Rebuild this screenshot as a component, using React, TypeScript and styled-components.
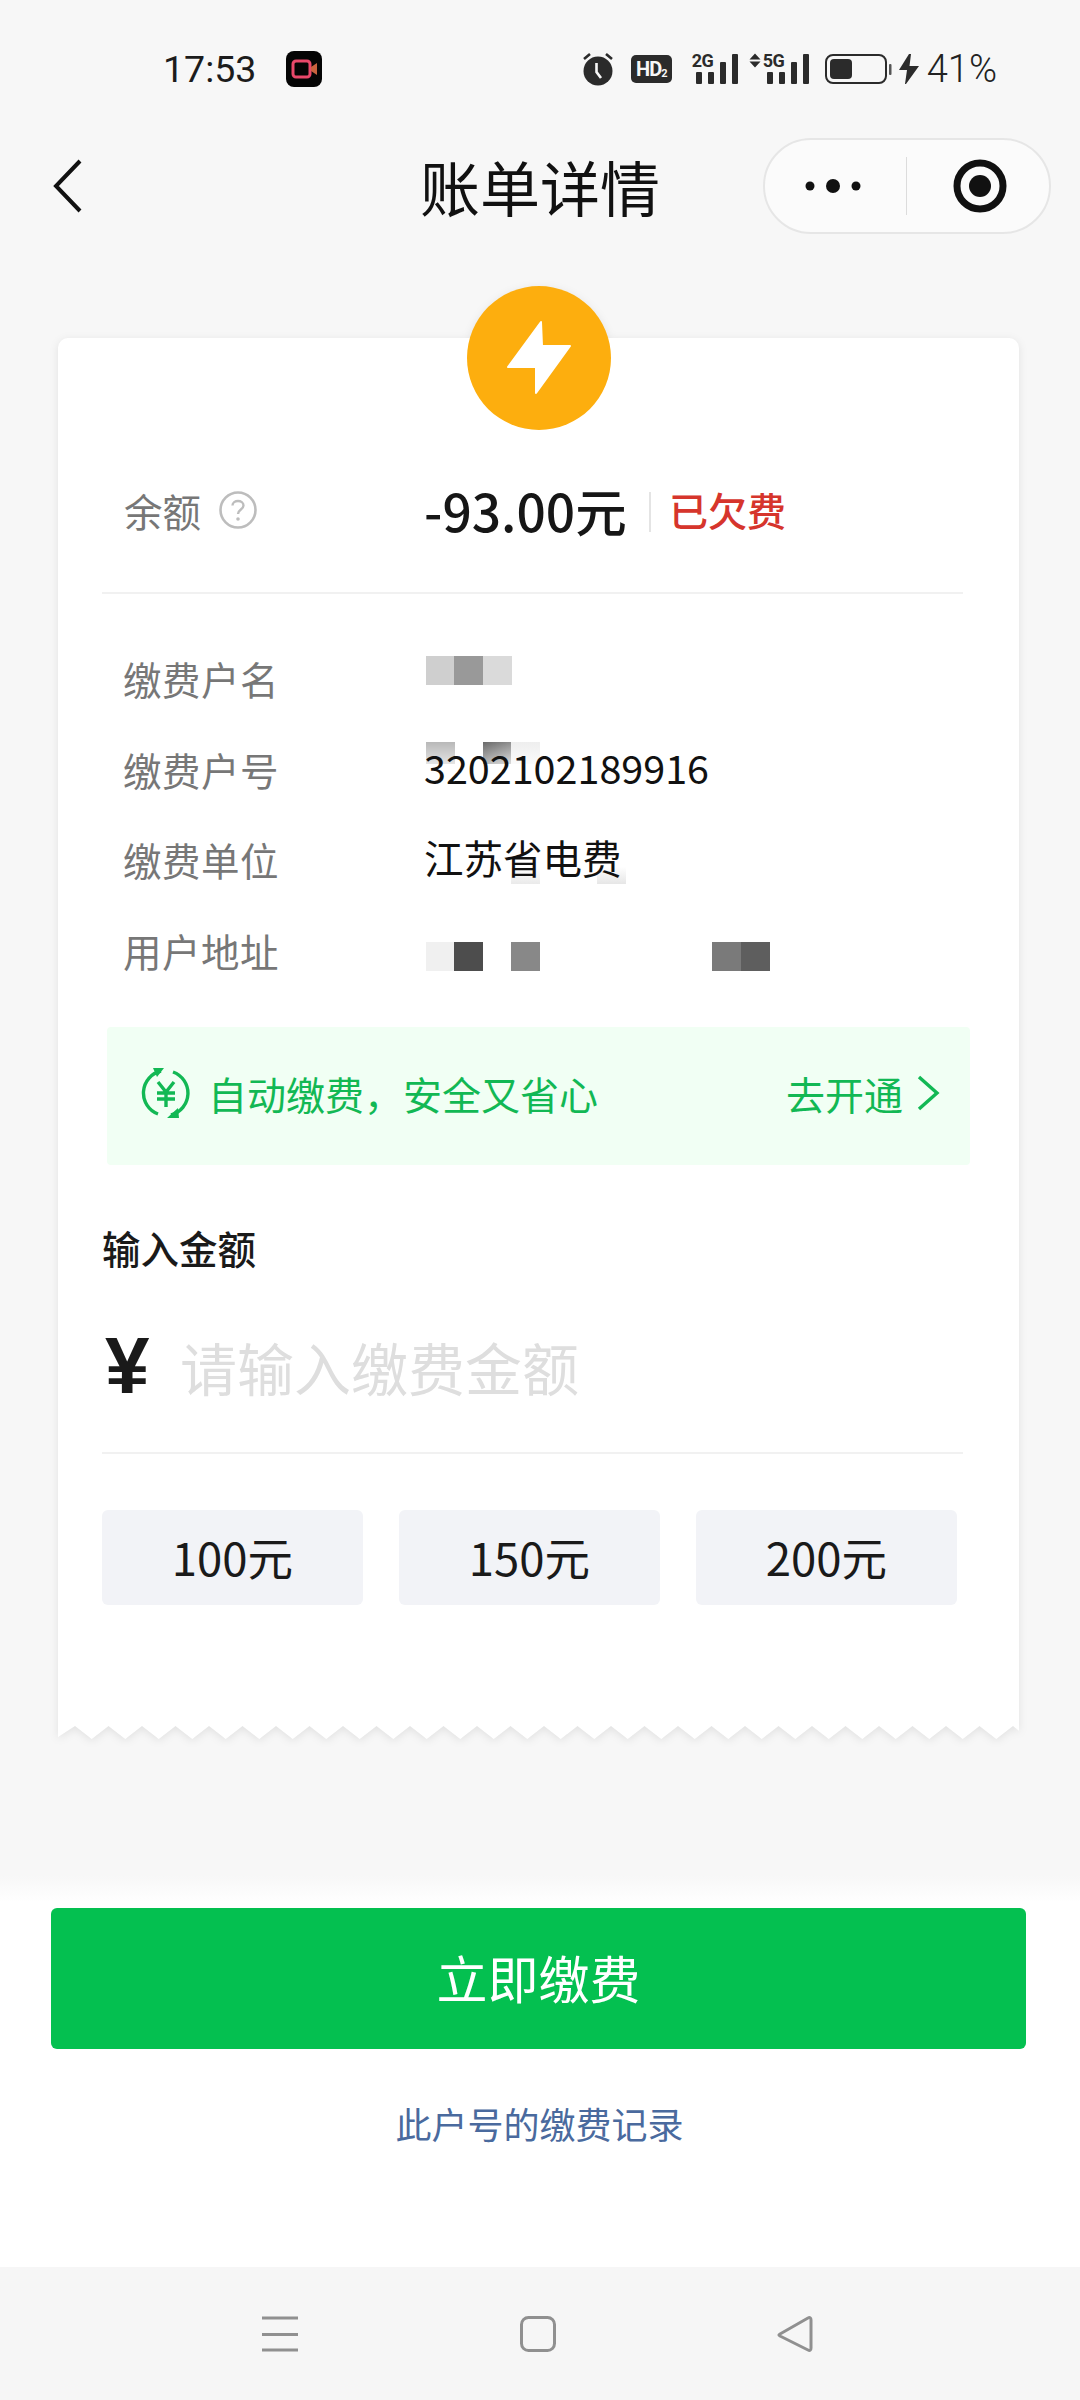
import React from 'react';
import styled, { createGlobalStyle } from 'styled-components';

const CJK = `"Noto Sans CJK SC", "Noto Sans", sans-serif`;

const GlobalStyle = createGlobalStyle`
  html, body {
    margin: 0;
    padding: 0;
    background: #f7f7f7;
  }
  * {
    box-sizing: border-box;
  }
`;

const infoRows = [
  { label: '缴费户名', value: '', mosaic: 'name' },
  { label: '缴费户号', value: '3202102189916', mosaic: 'number' },
  { label: '缴费单位', value: '江苏省电费', mosaic: 'company' },
  { label: '用户地址', value: '', mosaic: 'address' },
];

// pixelated privacy blocks: [left, colour]
const mosaics: Record<string, { top: number; h: number; cells: [number, string][] }> = {
  name: { top: -20, h: 29, cells: [[0, '#cfcfcf'], [28, '#999'], [57, '#dadada']] },
  number: { top: -25, h: 22, cells: [[0, 'linear-gradient(#b8b8b8, #e4e4e4)'], [57, 'linear-gradient(160deg, #6a6a6a, #ddd)'], [85, 'linear-gradient(#eee, #fbfbfb)']] },
  company: { top: 10, h: 17, cells: [[85, 'linear-gradient(#fff, #eaeaea)'], [171, 'linear-gradient(#fff, #e6e6e6)']] },
  address: { top: -6, h: 29, cells: [[0, '#f0f0f0'], [28, '#4d4d4d'], [85, '#888'], [286, '#7a7a7a'], [315, '#5e5e5e']] },
};

const Zigzag: React.FC = () => {
  const period = 33.5;
  const pts: string[] = ['0,0', '961,0', '961,13'];
  for (let x = 961 - ((961 - 17) % period); x > 0; x -= period) {
    pts.push(`${x + period / 2},15`, `${x},2`);
  }
  pts.push('0,13');
  return (
    <TornEdge viewBox="0 0 961 16" width="961" height="16">
      <polygon points={pts.join(' ')} fill="#fff" />
    </TornEdge>
  );
};

const Signal: React.FC<{ label: string; arrows?: boolean }> = ({ label, arrows }) => (
  <SignalBox $wide={!!arrows}>
    <svg width={arrows ? 61 : 46} height="32" viewBox={arrows ? '0 0 61 32' : '0 0 46 32'}>
      {arrows && <path d="M0.5 6.5 L6 0.5 L11.5 6.5 Z M0.5 8.5 L11.5 8.5 L6 14.5 Z" fill="#2b2b2b" />}
      {[0, 12, 24, 36].map((x, i) => (
        <rect
          key={x}
          x={x + (arrows ? 18 : 4)}
          y={[19, 19, 9, 1][i]}
          width="6"
          height={[12, 12, 22, 30][i]}
          rx="1"
          fill="#2b2b2b"
        />
      ))}
    </svg>
    <SignalLabel $left={arrows ? 14 : 0}>{label}</SignalLabel>
  </SignalBox>
);

const App: React.FC = () => {
  return (
    <Page>
      <GlobalStyle />
      <StatusBar>
        <StatusLeft>
          <Time>17:53</Time>
          <RecorderIcon width="36" height="36" viewBox="0 0 36 36">
            <rect width="36" height="36" rx="8" fill="#050505" />
            <rect x="7" y="10" width="17" height="16" rx="3" fill="none" stroke="#e9486a" strokeWidth="3" />
            <path d="M25 16 L31 12 V24 L25 20 Z" fill="#c9623f" />
          </RecorderIcon>
        </StatusLeft>
        <StatusRight>
          <svg width="32" height="34" viewBox="0 0 32 34">
            <circle cx="16" cy="19" r="14.5" fill="#2b2b2b" />
            <path d="M14.5 11 V20 L19 26" stroke="#f7f7f7" strokeWidth="2.6" fill="none" />
            <path d="M2 7 L8 2 M30 7 L24 2" stroke="#2b2b2b" strokeWidth="2.6" />
          </svg>
          <HdBadge>
            HD<sub>2</sub>
          </HdBadge>
          <Signal label="2G" />
          <Signal label="5G" arrows />
          <BatteryIcon width="68" height="30" viewBox="0 0 68 30">
            <rect x="1" y="1" width="60" height="28" rx="7" fill="none" stroke="#2b2b2b" strokeWidth="2" />
            <rect x="5" y="5" width="22" height="20" rx="4" fill="#2b2b2b" />
            <rect x="64" y="10" width="2.5" height="11" rx="1" fill="#555" />
          </BatteryIcon>
          <ChargeIcon width="20" height="30" viewBox="0 0 20 30">
            <path d="M10 0 H12 L10.5 12 H20 L7 30 H6 L8 16 H0 Z" fill="#2b2b2b" />
          </ChargeIcon>
          <Battery>41%</Battery>
        </StatusRight>
      </StatusBar>

      <NavBar>
        <BackIcon width="30" height="54" viewBox="0 0 30 54">
          <path d="M27 2 L3 27 L27 52" fill="none" stroke="#111" strokeWidth="4" />
        </BackIcon>
        <NavTitle>账单详情</NavTitle>
        <Capsule>
          <svg width="58" height="16" viewBox="0 0 58 16">
            <circle cx="6" cy="8" r="4.5" fill="#111" />
            <circle cx="29" cy="8" r="7" fill="#111" />
            <circle cx="52" cy="8" r="4.5" fill="#111" />
          </svg>
          <CapsuleDivider />
          <svg width="54" height="54" viewBox="0 0 54 54">
            <circle cx="27" cy="27" r="23" fill="none" stroke="#111" strokeWidth="7" />
            <circle cx="27" cy="27" r="11" fill="#111" />
          </svg>
        </Capsule>
      </NavBar>

      <Main>
        <Receipt>
          <BoltBadge>
            <svg width="66" height="74" viewBox="0 0 66 74">
              <path
                d="M35 1 L2 46 H30 V72 L64 25 H36 Z"
                fill="#fff"
                stroke="#fff"
                strokeWidth="2"
                strokeLinejoin="round"
              />
            </svg>
          </BoltBadge>
          <CardBody>
            <BalanceRow>
              <BalanceLabel>
                余额
                <svg width="38" height="38" viewBox="0 0 38 38">
                  <circle cx="19" cy="19" r="17.5" fill="none" stroke="#bdbdbd" strokeWidth="2.6" />
                  <path d="M13.5 14.5 C13.5 8.5 24.5 8.5 24.5 14.5 C24.5 18.5 19 18.5 19 23" fill="none" stroke="#bdbdbd" strokeWidth="2.4" />
                  <circle cx="19" cy="28" r="1.8" fill="#bdbdbd" />
                </svg>
              </BalanceLabel>
              <Amount>-93.00元</Amount>
              <AmountDivider />
              <Overdue>已欠费</Overdue>
            </BalanceRow>

            <InfoList>
              {infoRows.map((row) => (
                <InfoRow key={row.label}>
                  <InfoLabel>{row.label}</InfoLabel>
                  <InfoValue>
                    {row.value}
                    <Mosaic style={{ top: `calc(50% + ${mosaics[row.mosaic].top}px)` }}>
                      {mosaics[row.mosaic].cells.map(([left, bg]) => (
                        <MosaicCell
                          key={left}
                          style={{ left, height: mosaics[row.mosaic].h, background: bg }}
                        />
                      ))}
                    </Mosaic>
                  </InfoValue>
                </InfoRow>
              ))}
            </InfoList>

            <AutoPayBanner>
              <AutoPayText>
                <svg width="52" height="52" viewBox="0 0 52 52">
                  <path d="M21 4 A22.5 22.5 0 0 0 18 47" fill="none" stroke="#12b854" strokeWidth="3.4" />
                  <path d="M31 48 A22.5 22.5 0 0 0 33 5" fill="none" stroke="#12b854" strokeWidth="3.4" />
                  <path d="M13 1 H24 L17 10 Z M27 51 H39 L38 41 Z" fill="#12b854" />
                  <path d="M18 15 L26 25 L34 15 M17 26 H35 M17 32 H35 M26 25 V40" fill="none" stroke="#12b854" strokeWidth="3.4" />
                </svg>
                自动缴费，安全又省心
              </AutoPayText>
              <AutoPayAction>
                去开通
                <svg width="24" height="36" viewBox="0 0 24 36">
                  <path d="M3 2 L21 18 L3 34" fill="none" stroke="#12b854" strokeWidth="3.4" />
                </svg>
              </AutoPayAction>
            </AutoPayBanner>

            <InputTitle>输入金额</InputTitle>
            <InputRow>
              <Currency>¥</Currency>
              <Placeholder>请输入缴费金额</Placeholder>
            </InputRow>
            <QuickAmounts>
              {['100元', '150元', '200元'].map((a) => (
                <QuickButton key={a}>{a}</QuickButton>
              ))}
            </QuickAmounts>
          </CardBody>
          <Zigzag />
        </Receipt>
      </Main>

      <Footer>
        <PayButton>立即缴费</PayButton>
        <HistoryLink>此户号的缴费记录</HistoryLink>
      </Footer>

      <SystemBar>
        <svg width="36" height="36" viewBox="0 0 36 36">
          <path d="M0 2 H36 M0 18.500 H36 M0 34 H36" stroke="#909090" strokeWidth="3" />
        </svg>
        <svg width="36" height="36" viewBox="0 0 36 36">
          <rect x="1.500" y="1.500" width="33" height="33" rx="7" fill="none" stroke="#909090" strokeWidth="3" />
        </svg>
        <svg width="36" height="36" viewBox="0 0 36 36">
          <path d="M3 18 L31 2 C33 1 34 2 34 4 V32 C34 34 33 35 31 34 L3 20 C1.500 19 1.500 19 3 18 Z" fill="none" stroke="#909090" strokeWidth="3" strokeLinejoin="round" />
        </svg>
      </SystemBar>
    </Page>
  );
};

const Page = styled.div`
  width: 1080px;
  height: 2400px;
  display: flex;
  flex-direction: column;
  overflow: hidden;
  background: #f7f7f7;
  font-family: ${CJK};
`;

const StatusBar = styled.div`
  height: 138px;
  padding: 0 83px 0 163px;
  display: flex;
  align-items: center;
  justify-content: space-between;
`;

const StatusLeft = styled.div`
  display: flex;
  align-items: center;
  gap: 30px;
`;

const Time = styled.span`
  font-family: Roboto, sans-serif;
  font-size: 37.5px;
  color: #1c1c1c;
`;

const RecorderIcon = styled.svg`
  display: block;
`;

const StatusRight = styled.div`
  display: flex;
  align-items: center;
  gap: 11px;
`;

const HdBadge = styled.span`
  width: 41px;
  height: 28px;
  margin: 0 9px 0 6px;
  background: #2b2b2b;
  border-radius: 5px;
  color: #f7f7f7;
  font-family: Roboto, sans-serif;
  font-size: 20px;
  font-weight: 700;
  letter-spacing: -1px;
  line-height: 28px;
  text-align: center;

  sub {
    font-size: 11px;
    line-height: 0;
    vertical-align: -1px;
  }
`;

const SignalBox = styled.div<{ $wide: boolean }>`
  position: relative;
  width: ${({ $wide }) => ($wide ? 61 : 46)}px;
  height: 32px;
  line-height: 0;
`;

const SignalLabel = styled.span<{ $left: number }>`
  position: absolute;
  top: -1px;
  left: ${({ $left }) => $left}px;
  font-family: Roboto, sans-serif;
  font-size: 18px;
  font-weight: 700;
  letter-spacing: -0.5px;
  line-height: 18px;
  color: #2b2b2b;
`;

const BatteryIcon = styled.svg`
  margin: 0 -5px 0 4px;
`;

const ChargeIcon = styled.svg`
  margin-right: -3px;
`;

const Battery = styled.span`
  font-family: Roboto, sans-serif;
  font-size: 38px;
  font-weight: 300;
  color: #222;
`;

const NavBar = styled.div`
  position: relative;
  height: 96px;
  display: grid;
  grid-template-columns: 1fr auto 1fr;
  align-items: center;
`;

const BackIcon = styled.svg`
  margin-left: 53px;
`;

const NavTitle = styled.div`
  font-size: 60px;
  line-height: 94px;
  color: #111;
`;

const Capsule = styled.div`
  justify-self: end;
  width: 288px;
  height: 96px;
  margin-right: 29px;
  padding-left: 39px;
  display: flex;
  align-items: center;
  background: #fbfbfb;
  border: 2px solid #e6e6e6;
  border-radius: 48px;
`;

const CapsuleDivider = styled.span`
  width: 1px;
  height: 58px;
  margin: 0 46px 0 44px;
  background: #dcdcdc;
`;

const Main = styled.div`
  height: 1632px;
  padding: 104px 0 0 58px;
`;

const Receipt = styled.div`
  position: relative;
  width: 961px;
  filter: drop-shadow(0 2px 4px rgba(0, 0, 0, 0.09));
`;

const BoltBadge = styled.div`
  position: absolute;
  top: -52px;
  left: 409px;
  width: 144px;
  height: 144px;
  border-radius: 50%;
  background: #fdae0e;
  display: flex;
  align-items: center;
  justify-content: center;
`;

const CardBody = styled.div`
  height: 1387px;
  padding: 0 56px 0 44px;
  background: #fff;
  border-radius: 10px 10px 0 0;
`;

const TornEdge = styled.svg`
  display: block;
  margin-top: -1px;
`;

const BalanceRow = styled.div`
  height: 256px;
  padding: 148px 0 0 22px;
  display: flex;
  align-items: flex-start;
  border-bottom: 2px solid #f1f1f1;
`;

const BalanceLabel = styled.div`
  width: 300px;
  height: 48px;
  display: flex;
  align-items: center;
  gap: 18px;
  font-size: 38.5px;
  color: #777;
`;

const Amount = styled.div`
  width: 225px;
  font-size: 51.5px;
  font-weight: 500;
  line-height: 48px;
  white-space: nowrap;
  color: #161616;
`;

const AmountDivider = styled.span`
  width: 2px;
  height: 40px;
  margin: 6px 18px 0 0;
  background: #e4e4e4;
`;

const Overdue = styled.div`
  font-size: 39px;
  font-weight: 500;
  line-height: 46px;
  color: #d6352c;
`;

const InfoList = styled.div`
  margin-top: 41px;
`;

const InfoRow = styled.div`
  height: 90.5px;
  padding-left: 21px;
  display: grid;
  grid-template-columns: 301px 1fr;
  align-items: center;
`;

const InfoLabel = styled.div`
  margin-bottom: 4px;
  font-size: 38.5px;
  letter-spacing: 0.5px;
  color: #777;
`;

const InfoValue = styled.div`
  position: relative;
  isolation: isolate;
  height: 56px;
  margin-bottom: 8px;
  font-size: 39.5px;
  line-height: 56px;
  color: #111;
`;

const Mosaic = styled.div`
  position: absolute;
  z-index: -1;
  left: 2px;
  width: 0;
  height: 0;
`;

const MosaicCell = styled.span`
  position: absolute;
  top: 0;
  width: 29px;
`;

const AutoPayBanner = styled.div`
  height: 138px;
  margin: 30px -7px 0 5px;
  padding: 0 30px 6px 33px;
  display: flex;
  align-items: center;
  justify-content: space-between;
  background: #f1fff4;
  border-radius: 4px;
`;

const AutoPayText = styled.div`
  display: flex;
  align-items: center;
  gap: 16px;
  font-size: 39px;
  color: #12b854;
`;

const AutoPayAction = styled.div`
  display: flex;
  align-items: center;
  gap: 13px;
  font-size: 39px;
  color: #12b854;
`;

const InputTitle = styled.div`
  margin-top: 57px;
  font-size: 38.5px;
  font-weight: 500;
  line-height: 50px;
  color: #1a1a1a;
`;

const InputRow = styled.div`
  height: 182px;
  display: flex;
  align-items: center;
  padding: 8px 0 0 3px;
  border-bottom: 2px solid #f1f1f1;
`;

const Currency = styled.span`
  width: 75px;
  font-family: "Liberation Sans", sans-serif;
  font-size: 80px;
  font-weight: 700;
  color: #1a1a1a;
`;

const Placeholder = styled.span`
  font-size: 57px;
  color: #dedede;
`;

const QuickAmounts = styled.div`
  margin-top: 56px;
  display: grid;
  grid-template-columns: repeat(3, 261px);
  gap: 36px;
`;

const QuickButton = styled.div`
  height: 95px;
  padding-bottom: 3px;
  display: flex;
  align-items: center;
  justify-content: center;
  background: #f2f3f7;
  border-radius: 6px;
  font-size: 45.5px;
  color: #1a1a1a;
`;

const Footer = styled.div`
  flex: 1;
  padding: 42px 0 0 51px;
  background: linear-gradient(#f7f7f7 10px, #fff 36px);
`;

const PayButton = styled.div`
  width: 975px;
  height: 141px;
  padding-bottom: 4px;
  display: flex;
  align-items: center;
  justify-content: center;
  background: #04c050;
  border-radius: 6px;
  font-size: 51px;
  color: #fff;
`;

const HistoryLink = styled.div`
  width: 977px;
  margin-top: 48px;
  font-size: 36px;
  line-height: 52px;
  text-align: center;
  color: #4a6a9e;
`;

const SystemBar = styled.div`
  height: 133px;
  padding: 0 267px 0 262px;
  display: flex;
  align-items: center;
  justify-content: space-between;
  background: #f6f6f6;
`;

export default App;
